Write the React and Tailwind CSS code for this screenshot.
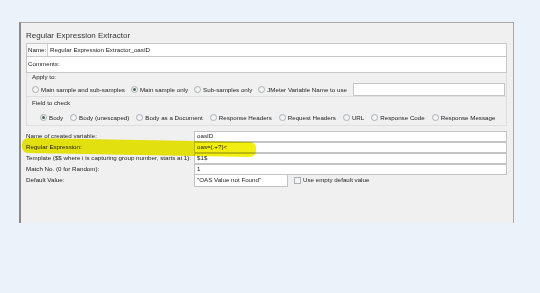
import React from 'react';

function Radio({ label, checked }) {
  return (
    <label className="flex items-center gap-[2px] whitespace-nowrap">
      <span className="w-[7px] h-[7px] rounded-full border border-[#a9b0b8] bg-gradient-to-br from-[#e8e8e8] to-[#ffffff] flex items-center justify-center">
        {checked && <span className="w-[3px] h-[3px] rounded-full bg-[#3b6e4a]" />}
      </span>
      <span>{label}</span>
    </label>
  );
}

function Field({ label, value, narrow }) {
  return (
    <div className="flex items-center h-[11px]">
      <div className="w-[168px] whitespace-nowrap overflow-visible">{label}</div>
      <div className={`${narrow ? 'w-[94px] h-[13px]' : 'flex-1 h-[11px]'} bg-white border border-[#c4c4c4] px-[2px] flex items-center`}>
        {value}
      </div>
      {narrow && (
        <label className="flex items-center gap-[2px] ml-[6px]">
          <span className="w-[7px] h-[7px] border border-[#a9b0b8] bg-[#f4f4f4]" />
          <span>Use empty default value</span>
        </label>
      )}
    </div>
  );
}

export default function App() {
  return (
    <div className="w-[540px] h-[293px] bg-[#ebf2fa] pt-[22px] pl-[19px] font-['Liberation_Sans',Arial,sans-serif] text-[6.2px] text-[#222] leading-none">
      <div className="relative w-[495px] h-[201px] bg-[#f0f0f0] border-t border-r border-[#a8a8a8] border-l-2 border-l-[#8a8a8a] px-[5px]">
        <div className="h-[20px] flex items-center text-[8px] text-[#333] pt-[5px]">Regular Expression Extractor</div>

        <div className="flex items-stretch h-[14px] border border-[#c8c8c8] bg-[#f7f7f7] mr-[1px]">
          <span className="pl-[1px] w-[20px] flex items-center">Name:</span>
          <div className="flex-1 bg-white border-l border-[#d0d0d0] flex items-center px-[2px]">Regular Expression Extractor_oasID</div>
        </div>
        <div className="flex items-center h-[16px] border border-t-0 border-[#c8c8c8] bg-white mr-[1px] pl-[1px]">
          Comments:
        </div>

        <div className="border border-t-0 border-[#dedede] h-[24px] pl-[5px] pt-[1px] mr-[1px]">
          <div>Apply to:</div>
          <div className="flex items-center gap-[6px] mt-[3px]">
            <Radio label="Main sample and sub-samples" />
            <Radio label="Main sample only" checked />
            <Radio label="Sub-samples only" />
            <Radio label="JMeter Variable Name to use" />
            <div className="w-[152px] h-[13px] bg-white border border-[#c4c4c4]" />
          </div>
        </div>

        <div className="border border-t-0 border-[#dedede] h-[29px] pl-[5px] pt-[3px] mr-[1px]">
          <div>Field to check</div>
          <div className="flex items-center gap-[7px] mt-[8px] pl-[8px]">
            <Radio label="Body" checked />
            <Radio label="Body (unescaped)" />
            <Radio label="Body as a Document" />
            <Radio label="Response Headers" />
            <Radio label="Request Headers" />
            <Radio label="URL" />
            <Radio label="Response Code" />
            <Radio label="Response Message" />
          </div>
        </div>

        <div className="mt-[5px] mr-[1px] flex flex-col">
          <Field label="Name of created variable:" value="oasID" />
          <Field label="Regular Expression:" value="oas=(.+?)<" />
          <Field label="Template ($$ where i is capturing group number, starts at 1):" value="$1$" />
          <Field label="Match No. (0 for Random):" value="1" />
          <Field label="Default Value:" value={'"OAS Value not Found"'} narrow />
        </div>

        <div className="absolute left-[1px] top-[117px] w-[234px] h-[15px] bg-[#f2ee10] mix-blend-multiply rounded-[6px] rotate-[1deg]" />
      </div>
    </div>
  );
}
